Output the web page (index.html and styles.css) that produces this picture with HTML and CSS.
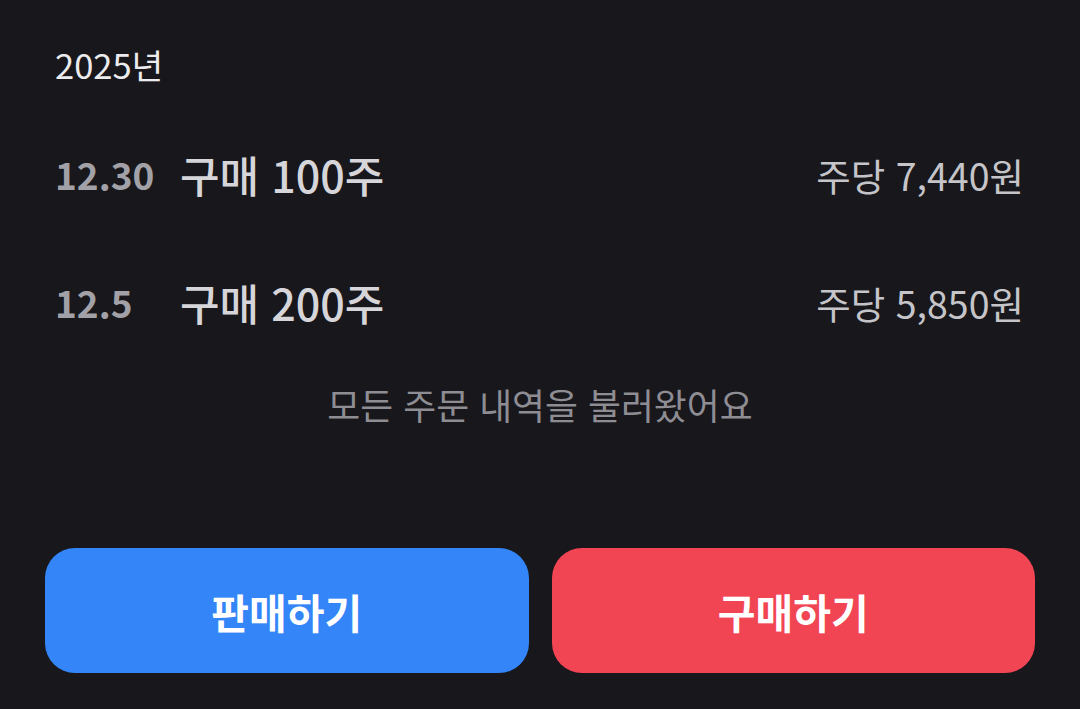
FILE: index.html
```html
<!DOCTYPE html>
<html lang="ko">
<head>
    <meta charset="UTF-8">
    <meta name="viewport" content="width=device-width, initial-scale=1.0">
    <title>주문 내역</title>
    <link rel="stylesheet" href="styles.css">
</head>
<body>
    <div class="page">
        <div class="year">2025년</div>

        <div class="order">
            <span class="date">12.30</span>
            <span class="title">구매 100주</span>
            <span class="price">주당 7,440원</span>
        </div>
        <div class="order">
            <span class="date">12.5</span>
            <span class="title">구매 200주</span>
            <span class="price">주당 5,850원</span>
        </div>

        <p class="notice">모든 주문 내역을 불러왔어요</p>

        <div class="actions">
            <button class="btn sell">판매하기</button>
            <button class="btn buy">구매하기</button>
        </div>
    </div>
</body>
</html>
```

FILE: styles.css
```css
body {
    font-family: "Noto Sans CJK KR", "Noto Sans", sans-serif;
    margin: 0;
    padding: 0;
    background-color: #18171c;
}
.page {
    padding: 44px 45px 0;
}
.year {
    padding-left: 10px;
    font-size: 34.5px;
    line-height: 40px;
    color: #ececee;
    margin-bottom: 26px;
}
.order {
    display: flex;
    align-items: center;
    height: 128px;
    padding: 0 11px 0 10px;
}
.date {
    width: 125px;
    font-size: 37px;
    font-weight: 600;
    color: #a2a1a7;
}
.title {
    font-size: 43px;
    font-weight: 500;
    color: #d6d6da;
}
.price {
    margin-left: auto;
    font-size: 37.5px;
    color: #c5c5c9;
}
.notice {
    margin: 13px 0 0;
    text-align: center;
    font-size: 35.8px;
    line-height: 50px;
    color: #8e8d93;
}
.actions {
    display: flex;
    gap: 23px;
    margin-top: 119px;
}
.btn {
    flex: 1;
    height: 125px;
    border: none;
    border-radius: 30px;
    font-family: inherit;
    font-size: 41px;
    font-weight: 700;
    color: #ffffff;
    cursor: pointer;
}
.sell {
    background-color: #3485f7;
}
.buy {
    background-color: #f24553;
}
```
